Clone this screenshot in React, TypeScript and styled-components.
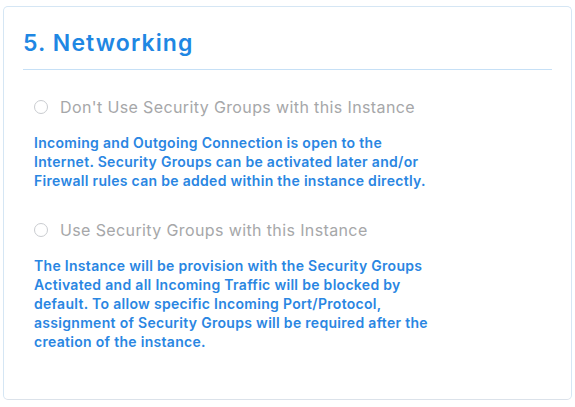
import React from "react";
import styled, { createGlobalStyle } from "styled-components";

const Global = createGlobalStyle`
  html, body { margin: 0; padding: 0; background: #ffffff; }
  body { font-family: Inter, "Noto Sans", sans-serif; }
  * { box-sizing: border-box; }
`;

const Card = styled.section`
  margin: 6px 0 0 3px;
  width: 569px;
  height: 394px;
  border: 1px solid #d5e6f4;
  border-bottom-color: #dbe2ea;
  border-radius: 5px;
  padding: 0 19px;
  background: #fff;
`;

const Title = styled.h2`
  margin: 0;
  padding: 22px 0 12px;
  font-size: 23px;
  line-height: 28px;
  font-weight: 600;
  letter-spacing: 1.1px;
  color: #1f87e3;
  border-bottom: 1px solid #c6e0f6;
`;

const Options = styled.div`
  display: flex;
  flex-direction: column;
  padding: 27px 0 0 11px;
  gap: 30px;
`;

const Option = styled.div`
  display: flex;
  flex-direction: column;
  gap: 16px;
`;

const RadioRow = styled.label`
  display: flex;
  align-items: center;
  gap: 12px;
  font-size: 16px;
  line-height: 20px;
  letter-spacing: 0.38px;
  color: #a6a7a9;
  cursor: pointer;
`;

const Radio = styled.span`
  width: 14px;
  height: 14px;
  border: 1px solid #c9ccd0;
  border-radius: 50%;
  background: #fff;
  flex: none;
`;

const Note = styled.p`
  margin: 0;
  white-space: nowrap;
  font-size: 14px;
  line-height: 19px;
  font-weight: 600;
  letter-spacing: 0.3px;
  color: #2a86e2;
`;

export default function App() {
  return (
    <>
      <Global />
      <Card>
        <Title>5. Networking</Title>
        <Options>
          <Option>
            <RadioRow>
              <Radio />
              Don't Use Security Groups with this Instance
            </RadioRow>
            <Note>
              Incoming and Outgoing Connection is open to the
              <br />
              Internet. Security Groups can be activated later and/or
              <br />
              Firewall rules can be added within the instance directly.
            </Note>
          </Option>
          <Option>
            <RadioRow>
              <Radio />
              Use Security Groups with this Instance
            </RadioRow>
            <Note>
              The Instance will be provision with the Security Groups
              <br />
              Activated and all Incoming Traffic will be blocked by
              <br />
              default. To allow specific Incoming Port/Protocol,
              <br />
              assignment of Security Groups will be required after the
              <br />
              creation of the instance.
            </Note>
          </Option>
        </Options>
      </Card>
    </>
  );
}
